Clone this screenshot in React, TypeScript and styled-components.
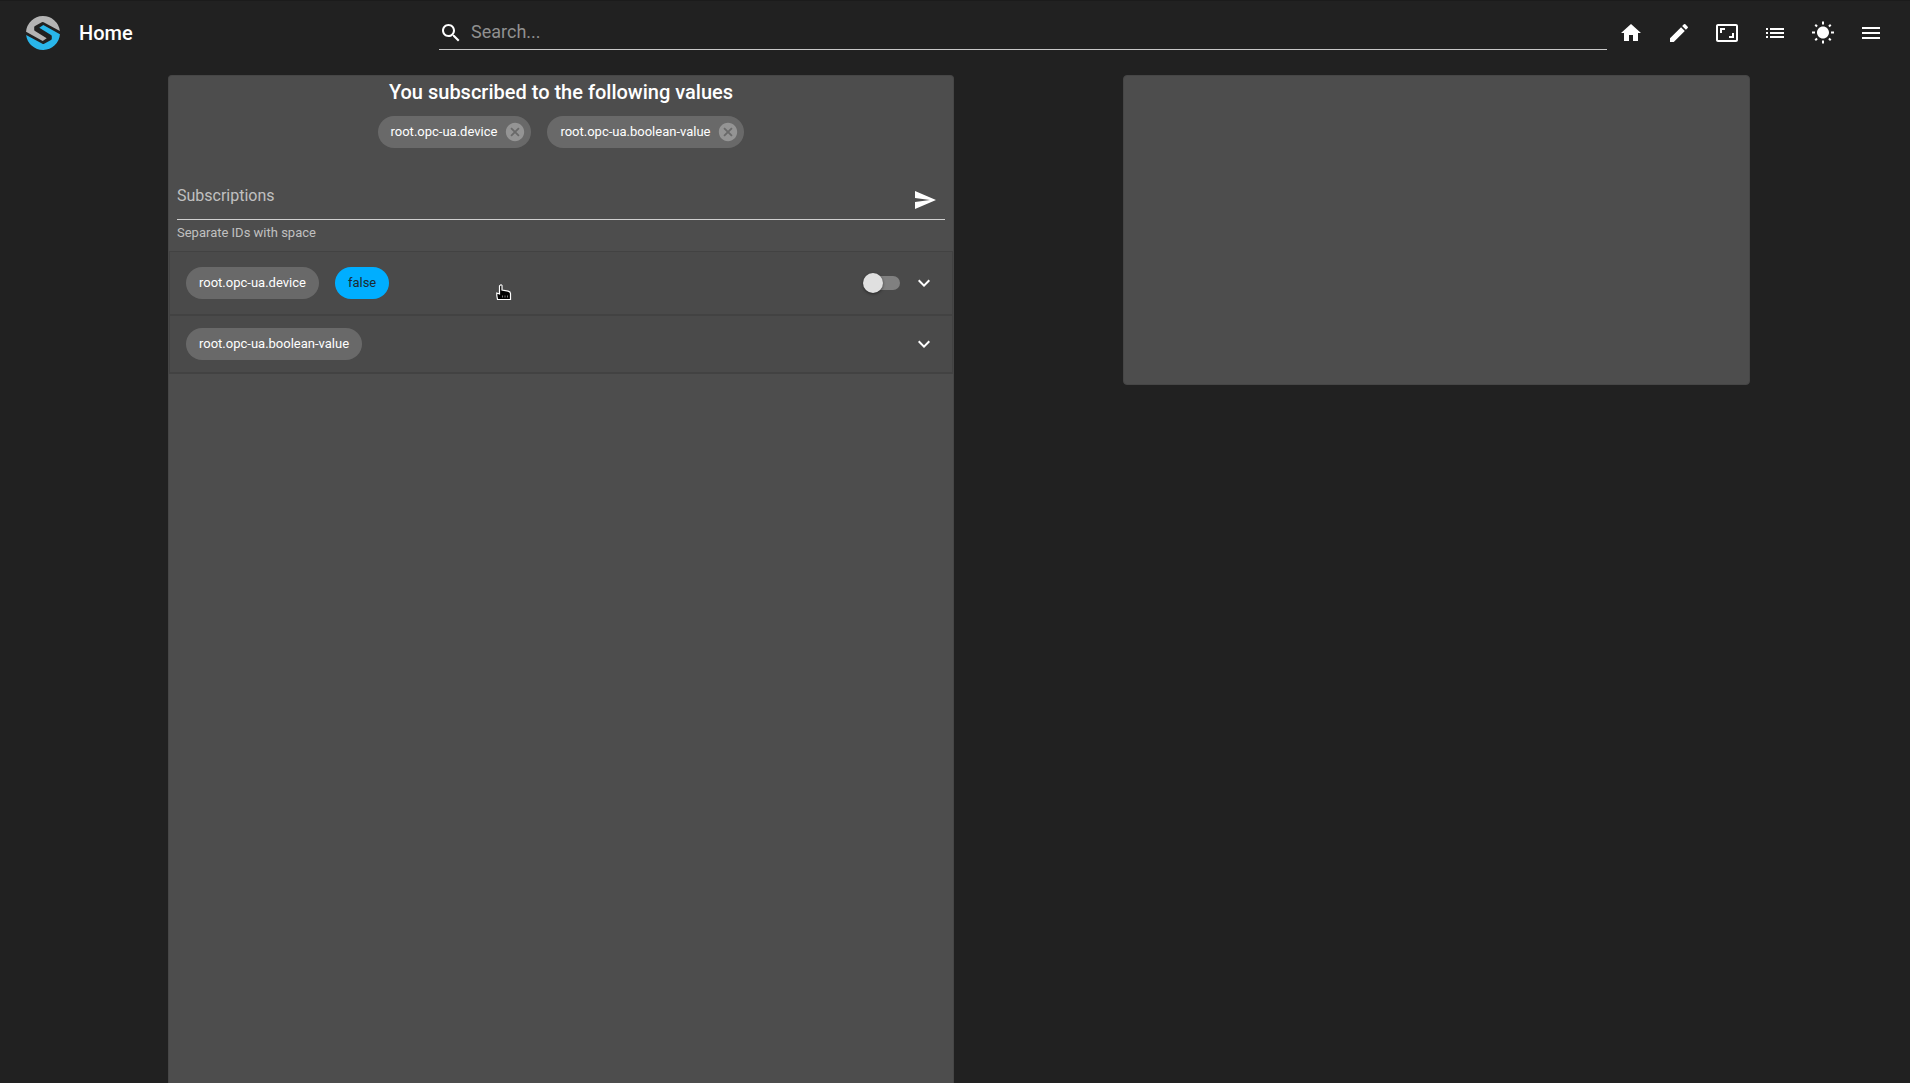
import React, { useState } from "react";
import styled, { createGlobalStyle } from "styled-components";

const Global = createGlobalStyle`
  *, *::before, *::after { box-sizing: border-box; }
  body {
    margin: 0;
    background: #212121;
    color: #fff;
    font-family: Roboto, "Liberation Sans", sans-serif;
  }
  button, input { font: inherit; color: inherit; }
`;

const Page = styled.div`
  display: flex;
  flex-direction: column;
  height: 100vh;
  overflow: hidden;
`;

const Header = styled.header`
  display: flex;
  align-items: center;
  flex: none;
  height: 65px;
  padding: 0 19px 0 25px;
  border-top: 1px solid #1b1b1b;
`;

const Brand = styled.a`
  display: flex;
  flex: 0 0 414px;
  align-items: center;
  gap: 18px;
  color: inherit;
  text-decoration: none;
  font-size: 20px;
  line-height: 32px;
  font-weight: 500;
`;

const SearchBox = styled.label`
  display: flex;
  flex: 1;
  align-items: center;
  height: 34px;
  gap: 8px;
  margin-right: 4px;
  border-bottom: 1px solid #c8c8c8;
`;

const SearchInput = styled.input`
  flex: 1;
  min-width: 0;
  padding: 0 0 2px;
  border: 0;
  outline: 0;
  background: transparent;
  font-size: 18px;
  line-height: 24px;
  &::placeholder { color: #909090; opacity: 1; }
`;

const IconButton = styled.button`
  display: inline-flex;
  flex: none;
  align-items: center;
  justify-content: center;
  width: 40px;
  height: 40px;
  padding: 0;
  border: 0;
  border-radius: 50%;
  background: transparent;
  cursor: pointer;
`;

const Toolbar = styled.nav`
  display: flex;
  gap: 8px;
`;

const Icon = styled.svg<{ $size?: number }>`
  display: block;
  flex: none;
  width: ${(p) => p.$size ?? 24}px;
  height: ${(p) => p.$size ?? 24}px;
  fill: currentColor;
`;

const Main = styled.main`
  display: grid;
  flex: 1;
  min-height: 0;
  grid-template-columns: 168fr 786fr 169fr 627fr 160fr;
  align-items: start;
  padding-top: 10px;
`;

const Panel = styled.section<{ $kind: "list" | "empty" }>`
  grid-column: ${(p) => (p.$kind === "list" ? 2 : 4)};
  min-width: 0;
  height: ${(p) => (p.$kind === "list" ? "100%" : "310px")};
  border: 1px solid #464646;
  border-bottom-width: ${(p) => (p.$kind === "list" ? 0 : 1)}px;
  border-radius: ${(p) => (p.$kind === "list" ? "4px 4px 0 0" : "4px")};
  background: #4d4d4d;
`;

const Title = styled.h1`
  margin: 0;
  text-align: center;
  font-size: 20px;
  line-height: 32px;
  font-weight: 500;
`;

const ChipRow = styled.div`
  display: flex;
  justify-content: center;
  gap: 16px;
  padding: 8px 0 32px;
`;

const ChipBox = styled.span<{ $active?: boolean }>`
  display: inline-flex;
  align-items: center;
  height: 32px;
  padding: 0 13px;
  border-radius: 16px;
  background: ${(p) => (p.$active ? "#00aeff" : "#696969")};
  color: ${(p) => (p.$active ? "#1c2a33" : "#fff")};
  font-size: 13px;
  line-height: 20px;
  white-space: nowrap;
`;

const RemovableChip = styled(ChipBox)`
  gap: 7px;
  padding-right: 5px;
`;

const RemoveButton = styled.button`
  display: flex;
  padding: 0;
  border: 0;
  background: transparent;
  color: #949494;
  cursor: pointer;
`;

const Form = styled.form`
  padding: 0 8px 8px;
`;

const FieldLine = styled.div`
  display: flex;
  align-items: center;
  height: 40px;
  border-bottom: 1px solid #d0d0d0;
`;

const FieldInput = styled.input`
  flex: 1;
  min-width: 0;
  height: 32px;
  padding: 0 0 8px;
  border: 0;
  outline: 0;
  background: transparent;
  font-size: 16px;
  line-height: 24px;
  &::placeholder { color: #c0c0c0; opacity: 1; }
`;

const Helper = styled.p`
  margin: 3px 0 0;
  color: #c0c0c0;
  font-size: 13px;
  line-height: 20px;
`;

const List = styled.ul`
  margin: 0;
  padding: 0;
  border-top: 1px solid #424242;
  list-style: none;
`;

const Row = styled.li<{ $tall?: boolean }>`
  display: flex;
  align-items: center;
  gap: 16px;
  height: ${(p) => (p.$tall ? 64 : 58)}px;
  padding: 0 8px 0 16px;
  border: 1px solid #424242;
  border-width: 0 1px 2px;
  background: #4a4a4a;
`;

const RowActions = styled.div`
  display: flex;
  align-items: center;
  gap: 4px;
  margin-left: auto;
`;

const Toggle = styled.input`
  appearance: none;
  position: relative;
  width: 34px;
  height: 14px;
  margin: 0;
  border-radius: 7px;
  background: #808080;
  cursor: pointer;
  &::before {
    content: "";
    position: absolute;
    top: -3px;
    left: -3px;
    width: 20px;
    height: 20px;
    border-radius: 50%;
    background: #e0e0e0;
    box-shadow: 0 1px 3px rgba(0, 0, 0, 0.5);
    transition: left 0.15s;
  }
  &:checked::before { left: 17px; }
`;

const Pointer = styled.svg`
  position: fixed;
  top: 284px;
  left: 496px;
  width: 16px;
  height: 17px;
  pointer-events: none;
`;

const paths = {
  search:
    "M15.5 14h-.79l-.28-.27C15.41 12.59 16 11.11 16 9.5 16 5.91 13.09 3 9.5 3S3 5.91 3 9.5 5.91 16 9.5 16c1.61 0 3.09-.59 4.23-1.57l.27.28v.79l5 4.99L20.49 19l-4.99-5zm-6 0C7.01 14 5 11.99 5 9.5S7.01 5 9.5 5 14 7.01 14 9.5 11.99 14 9.5 14z",
  home: "M10 20v-6h4v6h5v-8h3L12 3 2 12h3v8z",
  edit: "M3 17.25V21h3.75L17.81 9.94l-3.75-3.75L3 17.25zM20.71 7.04c.39-.39.39-1.02 0-1.41l-2.34-2.34a.9959.9959 0 0 0-1.41 0l-1.83 1.83 3.75 3.75 1.83-1.83z",
  fit: "M19 12h-2v3h-3v2h5v-5zM7 9h3V7H5v5h2V9zm14-6H3c-1.1 0-2 .9-2 2v14c0 1.1.9 2 2 2h18c1.1 0 2-.9 2-2V5c0-1.1-.9-2-2-2zm0 16.01H3V4.99h18v14.02z",
  list: "M3 13h2v-2H3v2zm0 4h2v-2H3v2zm0-8h2V7H3v2zm4 4h14v-2H7v2zm0 4h14v-2H7v2zM7 7v2h14V7H7z",
  sun: "M6.76 4.84l-1.8-1.79-1.41 1.41 1.79 1.79 1.42-1.41zM4 10.5H1v2h3v-2zm9-9.95h-2V3.5h2V.55zm7.45 3.91l-1.41-1.41-1.79 1.79 1.41 1.41 1.79-1.79zm-3.21 13.7l1.79 1.8 1.41-1.41-1.8-1.79-1.4 1.4zM20 10.5v2h3v-2h-3zm-8-5c-3.31 0-6 2.69-6 6s2.69 6 6 6 6-2.69 6-6-2.69-6-6-6zm-1 16.95h2V19.5h-2v2.95zm-7.45-3.91l1.41 1.41 1.79-1.8-1.41-1.41-1.79 1.8z",
  menu: "M3 18h18v-2H3v2zm0-5h18v-2H3v2zm0-7v2h18V6H3z",
  send: "M2.01 21L23 12 2.01 3 2 10l15 2-15 2z",
  expand: "M16.59 8.59L12 13.17 7.41 8.59 6 10l6 6 6-6z",
  cancel:
    "M12 2C6.47 2 2 6.47 2 12s4.47 10 10 10 10-4.47 10-10S17.53 2 12 2zm5 13.59L15.59 17 12 13.41 8.41 17 7 15.59 10.59 12 7 8.41 8.41 7 12 10.59 15.59 7 17 8.41 13.41 12 17 15.59z",
};

type IconName = keyof typeof paths;

const Glyph = ({ name, size }: { name: IconName; size?: number }) => (
  <Icon viewBox="0 0 24 24" $size={size} aria-hidden="true">
    <path d={paths[name]} />
  </Icon>
);

const Logo = () => (
  <Icon viewBox="0 0 36 36" $size={36} aria-hidden="true">
    <path
      fill="#b4b4b4"
      d="M1.05 16.7A17 17 0 0 1 34.88 16L18.6 7.2Q17.7 6.7 16.8 7.2L10 11Q9.2 11.5 9.2 12.3V14.8Q9.2 15.6 10 16L21.7 23.2 17.7 26Z"
    />
    <path
      fill="#29b6ea"
      d="M34.95 19.3A17 17 0 0 1 1.12 20L17.4 28.8Q18.3 29.3 19.2 28.8L26 25Q26.8 24.5 26.8 23.7V21.2Q26.8 20.4 26 20L14.3 12.8 18.3 10Z"
    />
  </Icon>
);

const tools: { icon: IconName; label: string }[] = [
  { icon: "home", label: "Home" },
  { icon: "edit", label: "Edit" },
  { icon: "fit", label: "Aspect ratio" },
  { icon: "list", label: "List" },
  { icon: "sun", label: "Light theme" },
  { icon: "menu", label: "Menu" },
];

const rows = [
  { id: "root.opc-ua.device", value: "false" },
  { id: "root.opc-ua.boolean-value" },
];

export default function App() {
  const [ids, setIds] = useState(rows.map((r) => r.id));
  const [on, setOn] = useState(false);

  return (
    <Page>
      <Global />
      <Header>
        <Brand href="#">
          <Logo />
          Home
        </Brand>
        <SearchBox>
          <Glyph name="search" />
          <SearchInput type="text" placeholder="Search..." aria-label="Search" />
        </SearchBox>
        <Toolbar>
          {tools.map((t) => (
            <IconButton key={t.icon} type="button" aria-label={t.label}>
              <Glyph name={t.icon} />
            </IconButton>
          ))}
        </Toolbar>
      </Header>
      <Main>
        <Panel $kind="list">
          <Title>You subscribed to the following values</Title>
          <ChipRow>
            {ids.map((id) => (
              <RemovableChip key={id}>
                {id}
                <RemoveButton
                  type="button"
                  aria-label={`Remove ${id}`}
                  onClick={() => setIds(ids.filter((x) => x !== id))}
                >
                  <Glyph name="cancel" size={22} />
                </RemoveButton>
              </RemovableChip>
            ))}
          </ChipRow>
          <Form onSubmit={(e) => e.preventDefault()}>
            <FieldLine>
              <FieldInput
                type="text"
                placeholder="Subscriptions"
                aria-label="Subscriptions"
                aria-describedby="ids-help"
              />
              <IconButton type="submit" aria-label="Send">
                <Glyph name="send" />
              </IconButton>
            </FieldLine>
            <Helper id="ids-help">Separate IDs with space</Helper>
          </Form>
          <List>
            {rows.map((row) => (
              <Row key={row.id} $tall={!!row.value}>
                <ChipBox>{row.id}</ChipBox>
                {row.value && <ChipBox $active>{on ? "true" : "false"}</ChipBox>}
                <RowActions>
                  {row.value && (
                    <Toggle
                      type="checkbox"
                      aria-label={row.id}
                      checked={on}
                      onChange={(e) => setOn(e.target.checked)}
                    />
                  )}
                  <IconButton type="button" aria-label={`Expand ${row.id}`}>
                    <Glyph name="expand" />
                  </IconButton>
                </RowActions>
              </Row>
            ))}
          </List>
        </Panel>
        <Panel $kind="empty" />
      </Main>
      <Pointer viewBox="0 0 16 17" aria-hidden="true">
        <path
          d="M4 1.5Q5 0 6 1.5V6L12 7.2Q14.5 7.8 14.5 9.5V15.5H1.5L.8 11.5V9L3.5 10V2Z"
          fill="#000"
          stroke="#fff"
          strokeWidth="1.2"
        />
        <path d="M6.5 11.5v2M9 11.5v2M11.5 11.5v2" stroke="#777" />
      </Pointer>
    </Page>
  );
}
